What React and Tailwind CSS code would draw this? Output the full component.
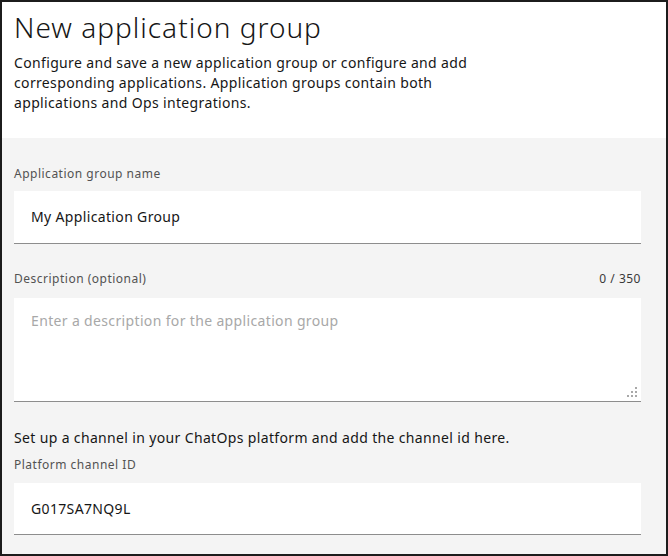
import React from 'react'

const font = { fontFamily: '"Noto Sans", "Open Sans", Arial, sans-serif' }

const ResizeGrip = () => (
  <svg width="10" height="10" viewBox="0 0 10 10" className="absolute right-[4px] bottom-[4px]">
    {[
      [8, 0], [8, 4], [4, 4], [8, 8], [4, 8], [0, 8],
    ].map(([x, y]) => (
      <rect key={`${x}-${y}`} x={x} y={y} width="2" height="2" fill="#a8a8a8" />
    ))}
  </svg>
)

const App = () => {
  return (
    <div
      className="w-[668px] h-[556px] border-2 border-[#1c1c1c] bg-[#f4f4f4] flex flex-col overflow-hidden text-[#161616]"
      style={font}
    >
      {/* Header */}
      <header className="bg-white h-[136px] shrink-0 pl-3 pt-[7px]">
        <h1 className="text-[28px] leading-[36px] font-light tracking-[1px]">New application group</h1>
        <p className="mt-2 text-sm leading-5 tracking-[0.35px] w-[485px]">
          Configure and save a new application group or configure and add corresponding applications.
          Application groups contain both applications and Ops integrations.
        </p>
      </header>

      {/* Form */}
      <div className="pl-3 pt-[28px] flex flex-col">
        <label className="text-xs leading-4 tracking-[0.5px] text-[#525252]">Application group name</label>
        <div className="mt-[9px] w-[627px] h-[53px] bg-white border-b border-[#8d8d8d] flex items-center px-[17px] text-sm tracking-[0.35px]">
          My Application Group
        </div>

        <div className="mt-[27px] w-[627px] flex justify-between text-xs leading-4 tracking-[0.5px] text-[#525252]">
          <span>Description (optional)</span>
          <span className="text-[#393939]">0 / 350</span>
        </div>
        <div className="mt-[11px] w-[627px] h-[104px] bg-white border-b border-[#8d8d8d] relative px-[17px] pt-[13px] text-sm leading-5 tracking-[0.35px] text-[#a8a8a8]">
          Enter a description for the application group
          <ResizeGrip />
        </div>

        <p className="mt-[26px] text-sm leading-5 tracking-[0.35px]">
          Set up a channel in your ChatOps platform and add the channel id here.
        </p>
        <label className="mt-[9px] text-xs leading-4 tracking-[0.5px] text-[#525252]">Platform channel ID</label>
        <div className="mt-[10px] w-[627px] h-[52px] bg-white border-b border-[#8d8d8d] flex items-center px-[17px] text-sm tracking-[0.35px]">
          G017SA7NQ9L
        </div>
      </div>
    </div>
  )
}

export default App
